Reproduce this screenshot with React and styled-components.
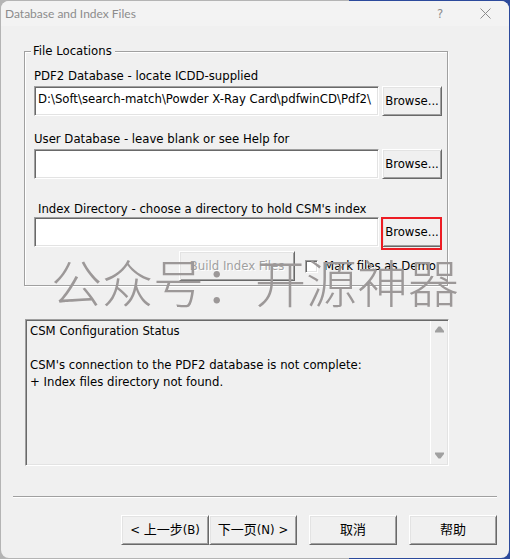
import React, { useState } from 'react';
import styled, { createGlobalStyle, css } from 'styled-components';

const GlobalStyle = createGlobalStyle`
  * {
    box-sizing: border-box;
  }

  body {
    margin: 0;
    color: #000;
    background: linear-gradient(to right, #b4b4b4 349px, #2c4a9c 349px);
    font: 13px/16px 'DejaVu Sans Condensed', 'Noto Sans CJK SC', sans-serif;
  }

  button,
  input,
  textarea {
    font: inherit;
    color: inherit;
  }
`;

const sunken = css`
  border: 1px solid;
  border-color: #a0a0a0 #fff #fff #a0a0a0;
  box-shadow: inset 1px 1px 0 #696969, inset -1px -1px 0 #e3e3e3;
`;

const Window = styled.div`
  min-height: 100vh;
  padding: 1px;
`;

const Dialog = styled.form`
  position: relative;
  display: flex;
  flex-direction: column;
  min-height: calc(100vh - 2px);
  overflow: hidden;
  border-radius: 8px;
  background-color: #f0f0f0;
`;

const TitleBar = styled.header`
  display: flex;
  align-items: center;
  height: 25px;
  padding: 0 12px 0 4px;
  background-color: #f3f3f3;
  color: #8c8c8c;
`;

const Title = styled.h1`
  flex: 1;
  margin: 0;
  font: 12px/16px Lato, sans-serif;
`;

const CaptionButton = styled.button`
  display: flex;
  align-items: center;
  justify-content: center;
  width: 24px;
  height: 24px;
  margin-left: 21px;
  padding: 0;
  border: 0;
  background: none;
`;

const Body = styled.main`
  display: flex;
  flex: 1;
  flex-direction: column;
  padding: 17px 61px 0 23px;
`;

const GroupBox = styled.fieldset`
  position: relative;
  min-width: 0;
  margin: 0;
  padding: 0 5px 4px 9px;
  border: 1px solid #a0a0a0;
  box-shadow: 1px 1px 0 #fff, inset 1px 1px 0 #fff;
`;

const Legend = styled.legend`
  margin-left: -3px;
  padding: 0 3px 0 2px;
  background-color: #f0f0f0;
`;

const Field = styled.div`
  margin-top: ${({ $space }) => $space}px;
`;

const Label = styled.label`
  display: block;
  padding-bottom: ${({ $tight }) => ($tight ? 0 : 2)}px;
  padding-left: ${({ $tight }) => ($tight ? 4 : 0)}px;
`;

const FieldRow = styled.div`
  display: flex;
  gap: 3px;
`;

const PathInput = styled.input`
  ${sunken}
  flex: 1;
  min-width: 0;
  height: 30px;
  padding: 0 2px 6px 3px;
  border-radius: 0;
  outline: 0;
  background-color: #fff;
`;

const Button = styled.button`
  width: ${({ $width }) => $width || 88}px;
  height: 30px;
  padding: 0 0 1px;
  border: 1px solid;
  border-color: #fff #696969 #696969 #fff;
  box-shadow: inset 1px 1px 0 #e3e3e3, inset -1px -1px 0 #a0a0a0;
  background-color: #f0f0f0;
  white-space: pre;

  &:disabled {
    color: #a0a0a0;
    text-shadow: 1px 1px 0 #fff;
  }
`;

const Marked = styled.div`
  position: relative;

  &::after {
    content: '';
    position: absolute;
    inset: 0 0 -3px -1px;
    border: 2px solid #ed1c24;
    pointer-events: none;
  }
`;

const IndexRow = styled.div`
  display: flex;
  align-items: center;
  justify-content: flex-end;
  gap: 10px;
  margin-top: 4px;
  padding-right: 6px;
`;

const CheckLabel = styled.label`
  display: flex;
  align-items: center;
  gap: 6px;
  white-space: nowrap;
`;

const Checkbox = styled.input`
  ${sunken}
  appearance: none;
  width: 13px;
  height: 13px;
  margin: 0;
  background-color: #fff;

  &:checked {
    background-color: #696969;
  }
`;

const StatusBox = styled.div`
  ${sunken}
  display: flex;
  height: 147px;
  margin: 33px -1px 0 1px;
  padding: 1px;
`;

const StatusText = styled.textarea`
  flex: 1;
  min-width: 0;
  padding: 1px 3px;
  border: 0;
  outline: 0;
  overflow: hidden;
  resize: none;
  background: none;
  line-height: 17px;
`;

const ScrollBar = styled.div`
  display: flex;
  flex-direction: column;
  align-items: center;
  justify-content: space-between;
  width: 17px;
  padding: 5px 0;
  border-left: 1px solid #fff;
`;

const Footer = styled.footer`
  display: flex;
  justify-content: flex-end;
  gap: 12px;
  margin: 0 12px;
  padding: 18px 0 13px;
  border-top: 1px solid #a0a0a0;
  box-shadow: inset 0 1px 0 #fff;
`;

const Pager = styled.div`
  display: flex;
`;

const Watermark = styled.div`
  position: absolute;
  top: 250px;
  left: 50px;
  color: #9c9898;
  font: 300 51px/60px 'Noto Sans CJK SC', sans-serif;
  white-space: nowrap;
  pointer-events: none;
`;

const fields = [
  {
    id: 'pdf2',
    label: 'PDF2 Database - locate ICDD-supplied',
    value: 'D:\\Soft\\search-match\\Powder X-Ray Card\\pdfwinCD\\Pdf2\\',
    space: 9,
  },
  {
    id: 'user',
    label: 'User Database - leave blank or see Help for',
    value: '',
    space: 15,
  },
  {
    id: 'index',
    label: "Index Directory - choose a directory to hold CSM's index",
    value: '',
    space: 22,
    tight: true,
    marked: true,
  },
];

const status = `CSM Configuration Status

CSM's connection to the PDF2 database is not complete:
+ Index files directory not found.`;

function PathField({ field }) {
  const [value, setValue] = useState(field.value);
  const browse = <Button type="button" $width={60}>Browse...</Button>;

  return (
    <Field $space={field.space}>
      <Label htmlFor={field.id} $tight={field.tight}>{field.label}</Label>
      <FieldRow>
        <PathInput
          id={field.id}
          value={value}
          onChange={(e) => setValue(e.target.value)}
        />
        {field.marked ? <Marked>{browse}</Marked> : browse}
      </FieldRow>
    </Field>
  );
}

function App() {
  return (
    <Window>
      <GlobalStyle />
      <Dialog onSubmit={(e) => e.preventDefault()}>
        <TitleBar>
          <Title>Database and Index Files</Title>
          <CaptionButton type="button" aria-label="Help">?</CaptionButton>
          <CaptionButton type="button" aria-label="Close">
            <svg width="11" height="11" viewBox="0 0 11 11" stroke="#8c8c8c">
              <path d="M.5.5l10 10M10.5.5l-10 10" />
            </svg>
          </CaptionButton>
        </TitleBar>

        <Body>
          <GroupBox>
            <Legend>File Locations</Legend>
            {fields.map((field) => (
              <PathField key={field.id} field={field} />
            ))}
            <IndexRow>
              <Button type="button" $width={116} disabled>Build Index Files</Button>
              <CheckLabel>
                <Checkbox type="checkbox" />
                Mark files as Demo
              </CheckLabel>
            </IndexRow>
          </GroupBox>

          <StatusBox>
            <StatusText readOnly aria-label="Status" value={status} />
            <ScrollBar>
              <svg width="9" height="7" viewBox="0 0 9 7" fill="#a0a0a0">
                <path d="M3.5 0.5h2L9 5v1.5H0V5z" />
              </svg>
              <svg width="9" height="7" viewBox="0 0 9 7" fill="#a0a0a0">
                <path d="M0 .5h9V2L5.5 6.5h-2L0 2z" />
              </svg>
            </ScrollBar>
          </StatusBox>
        </Body>

        <Footer>
          <Pager>
            <Button type="button">{'< 上一步(B)'}</Button>
            <Button type="submit">{'下一页(N) >'}</Button>
          </Pager>
          <Button type="button">取消</Button>
          <Button type="button">帮助</Button>
        </Footer>

        <Watermark>公众号：开源神器</Watermark>
      </Dialog>
    </Window>
  );
}

export default App;
